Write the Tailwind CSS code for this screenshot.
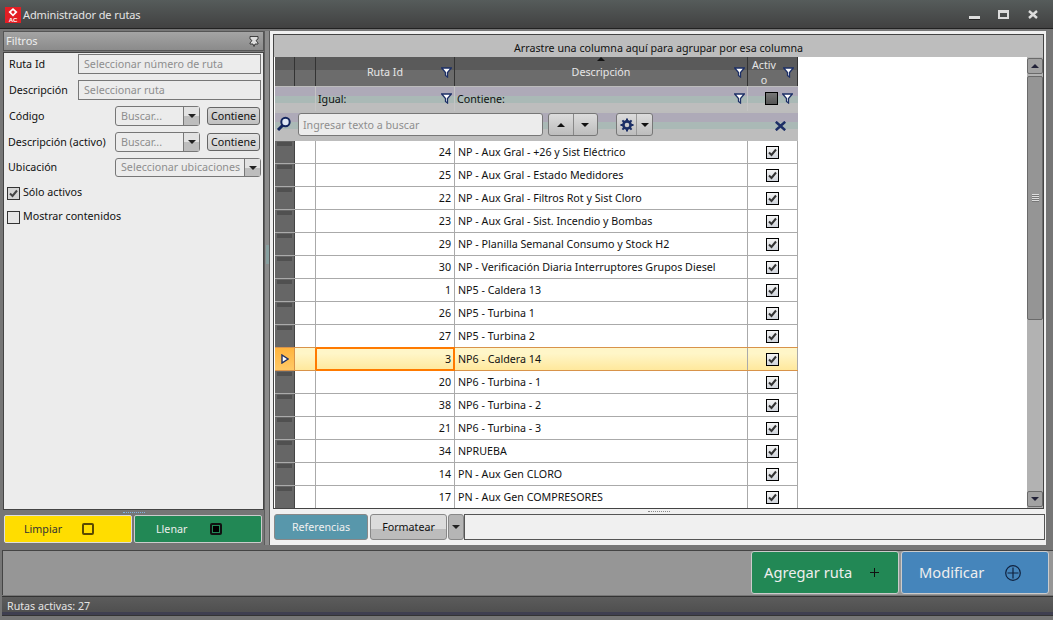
<!DOCTYPE html>
<html lang="es">
<head>
    <meta charset="UTF-8">
    <title>Administrador de rutas</title>
    <script src="https://cdn.jsdelivr.net/npm/@tailwindcss/browser@4"></script>
</head>
<body class="w-[1053px] h-[620px] overflow-hidden bg-[#767676] flex flex-col font-['Noto_Sans',sans-serif] text-[10.7px] text-[#111]">

    <!-- title bar -->
    <header class="h-[29px] shrink-0 flex items-center pl-[5px] pt-[1px] bg-gradient-to-b from-[#565c5b] to-[#414141] border-b border-[#222] text-[#e4e4e4]">
        <svg class="w-[16px] h-[16px]" viewBox="0 0 16 16">
            <rect width="16" height="16" fill="#e31e24"/>
            <path d="M8 1 L12.5 5 L8 9.5 L3.5 5 Z M8 3.2 L6 5 L8 7.2 L10 5 Z" fill="#fff" fill-rule="evenodd"/>
            <text x="8" y="15" text-anchor="middle" font-family="Liberation Sans" font-weight="700" font-size="6" fill="#fff">AC</text>
        </svg>
        <span class="ml-[2px] pt-[1px] text-[11px] tracking-[-0.1px]">Administrador de rutas</span>
        <div class="ml-auto flex items-center pr-[15px]">
            <span class="block w-[11px] h-[4px] mt-[6px] bg-[#ddd] border-b border-[#222]"></span>
            <span class="block ml-[18px] w-[11px] h-[9px] border-2 border-t-[3px] border-[#ddd]"></span>
            <svg class="ml-[19px] w-[10px] h-[9px]" viewBox="0 0 10 9"><path d="M1 1 L9 8 M9 1 L1 8" stroke="#ddd" stroke-width="2.4"/></svg>
        </div>
    </header>

    <div class="flex h-[516px] shrink-0 pt-[2px]">
        <!-- filter panel -->
        <aside class="ml-[3px] w-[261px] flex flex-col">
            <div class="h-[20px] flex items-center justify-between pl-[2px] pr-[4px] bg-gradient-to-b from-[#a4a4a4] to-[#8b8b8b] border border-[#555] text-[#eee]">
                <span class="text-[11px]">Filtros</span>
                <svg class="w-[10px] h-[11px]" viewBox="0 0 10 11"><path d="M1 .5 H9 V3 L7 4.5 L9 7 V8 H6 L5 10.5 L4 8 H1 V7 L3 4.5 L1 3 Z" fill="#ddd" stroke="#222" stroke-width=".8"/></svg>
            </div>
            <div class="mt-[1px] h-[458px] bg-[#ececec] border border-[#444] pt-[1px] pr-[2px] flex flex-col">
                <div class="flex items-center h-[20px] mb-[6px]">
                    <span class="w-[74px] pl-[5px] pt-[1px]">Ruta Id</span>
                    <span class="flex-1 h-[20px] flex items-center pl-[5px] pt-[1px] text-[#8e8e8e] border border-[#777]">Seleccionar número de ruta</span>
                </div>
                <div class="flex items-center h-[20px] mb-[6px]">
                    <span class="w-[74px] pl-[5px] pt-[1px]">Descripción</span>
                    <span class="flex-1 h-[20px] flex items-center pl-[5px] pt-[1px] text-[#8e8e8e] border border-[#777]">Seleccionar ruta</span>
                </div>
                <div class="flex items-center h-[20px] mb-[6px]">
                    <span class="w-[111px] pl-[5px]">Código</span>
                    <span class="w-[85px] h-[20px] flex items-center pl-[5px] text-[#8e8e8e] border border-[#777] rounded-[3px]">Buscar...
                        <span class="ml-auto w-[16px] h-full flex items-center justify-center border-l border-[#777] bg-gradient-to-b from-[#e2e2e2] from-50% to-[#bdbdbd] to-50%"><span class="border-x-[4px] border-x-transparent border-t-[4px] border-t-[#222]"></span></span>
                    </span>
                    <span class="ml-[7px] w-[53px] h-[18px] flex items-center justify-center border border-[#666] rounded-[3px] bg-gradient-to-b from-[#d8d8d8] to-[#c0c0c0]">Contiene</span>
                </div>
                <div class="flex items-center h-[20px] mb-[6px]">
                    <span class="w-[111px] pl-[4px] whitespace-nowrap">Descripción (activo)</span>
                    <span class="w-[85px] h-[20px] flex items-center pl-[5px] text-[#8e8e8e] border border-[#777] rounded-[3px]">Buscar...
                        <span class="ml-auto w-[16px] h-full flex items-center justify-center border-l border-[#777] bg-gradient-to-b from-[#e2e2e2] from-50% to-[#bdbdbd] to-50%"><span class="border-x-[4px] border-x-transparent border-t-[4px] border-t-[#222]"></span></span>
                    </span>
                    <span class="ml-[7px] w-[53px] h-[18px] flex items-center justify-center border border-[#666] rounded-[3px] bg-gradient-to-b from-[#e4e4e4] to-[#d0d0d0]">Contiene</span>
                </div>
                <div class="flex items-center h-[19px] mb-[4px]">
                    <span class="w-[111px] pl-[4px]">Ubicación</span>
                    <span class="flex-1 h-[19px] flex items-center pl-[5px] text-[#8e8e8e] border border-[#777] rounded-[3px] whitespace-nowrap">Seleccionar ubicaciones
                        <span class="ml-auto w-[16px] h-full flex items-center justify-center border-l border-[#777] bg-gradient-to-b from-[#e2e2e2] from-50% to-[#bdbdbd] to-50%"><span class="border-x-[4px] border-x-transparent border-t-[4px] border-t-[#222]"></span></span>
                    </span>
                </div>
                <label class="flex items-center h-[24px] pl-[3px] gap-[3px]">
                    <span class="w-[13px] h-[13px] border border-[#333] bg-[#d4d4d4] flex items-center justify-center">
                        <svg class="w-[9px] h-[9px]" viewBox="0 0 9 9"><path d="M1 4.5 L3.5 7 L8 1.5" fill="none" stroke="#444" stroke-width="2"/></svg>
                    </span>
                    <span class="-mt-[2px]">Sólo activos</span>
                </label>
                <label class="flex items-center h-[24px] pl-[3px] gap-[3px]">
                    <span class="w-[13px] h-[13px] border border-[#333] bg-[#e6e6e6]"></span>
                    <span class="-mt-[2px]">Mostrar contenidos</span>
                </label>
            </div>
            <div class="h-[5px] flex justify-center items-center"><span class="w-[22px] border-t border-dotted border-[#7fb4e0]"></span></div>
            <div class="flex h-[28px] pl-[1px] gap-[2px]">
                <button class="w-[128px] flex items-center pl-[19px] gap-[20px] bg-[#ffdd00] border border-[#ddd] rounded-[2px] text-[#333]">
                    Limpiar <span class="w-[12px] h-[12px] border-2 border-[#5a4a00] rounded-[2px]"></span>
                </button>
                <button class="w-[128px] flex items-center pl-[21px] gap-[23px] bg-[#228855] border border-[#ccc] rounded-[2px] text-[#eee]">
                    Llenar <span class="w-[12px] h-[12px] border-2 border-[#111] rounded-[2px] flex items-center justify-center"><span class="w-[6px] h-[6px] bg-black"></span></span>
                </button>
            </div>
        </aside>

        <!-- splitter -->
        <div class="w-[6px] flex items-center bg-[#8c8c8c] border-x border-[#5c5c5c]"><span class="w-[3px] h-[19px] ml-[1px] mb-[68px] bg-[#87a0a0]"></span></div>

        <!-- grid panel -->
        <section class="mr-[7px] flex-1 bg-[#f0f0f0] pt-[3px] pl-[3px] pr-[2px] pb-[5px] flex flex-col">
            <div class="h-[475px] border border-[#444] bg-white flex flex-col">
                <div class="h-[22px] pt-[5px] text-center bg-[#bdbdbd]">Arrastre una columna aquí para agrupar por esa columna</div>
                <div class="flex h-[451px]">
                    <div class="w-[524px] pl-[1px] flex flex-col">
                        <!-- column heads -->
                        <div class="flex h-[29px] shrink-0 text-[#e6e6e6] bg-gradient-to-b from-[#5a5a5a] from-45% to-[#6c6c6c] to-45%">
                            <div class="w-[20px] border-r border-[#333]"></div>
                            <div class="w-[21px] border-r border-[#333]"></div>
                            <div class="w-[139px] border-r border-[#333] flex items-center justify-center pt-[1px] relative">Ruta Id
                                <svg class="absolute right-[2px] top-[10px] w-[11px] h-[11px]" viewBox="0 0 11 11"><path d="M.7 1 H10.3 L6.5 5.5 V10 L4.5 8.5 V5.5 Z" fill="#fff" stroke="#1c2f66" stroke-width="1.3"/></svg>
                            </div>
                            <div class="w-[293px] border-r border-[#333] flex items-center justify-center pt-[1px] relative">Descripción
                                <span class="absolute top-0 left-[142px] border-x-[4px] border-x-transparent border-b-[4px] border-b-[#111]"></span>
                                <svg class="absolute right-[2px] top-[10px] w-[11px] h-[11px]" viewBox="0 0 11 11"><path d="M.7 1 H10.3 L6.5 5.5 V10 L4.5 8.5 V5.5 Z" fill="#fff" stroke="#1c2f66" stroke-width="1.3"/></svg>
                            </div>
                            <div class="w-[50px] relative leading-[15px] pt-[1px] border-r border-[#333]"><span class="block w-[30px] ml-[1px] text-center">Activ<br>o</span>
                                <svg class="absolute right-[3px] top-[10px] w-[11px] h-[11px]" viewBox="0 0 11 11"><path d="M.7 1 H10.3 L6.5 5.5 V10 L4.5 8.5 V5.5 Z" fill="#fff" stroke="#1c2f66" stroke-width="1.3"/></svg>
                            </div>
                        </div>
                        <!-- filter row -->
                        <div class="flex h-[25px] shrink-0 bg-[linear-gradient(#bcbcbc_0,#bcbcbc_1px,#aeaab8_1px,#aeaab8_10px,#aab9b6_10px,#aab9b6_17px,#bdbdbd_17px)]">
                            <div class="w-[41px] border-r border-[#c4c4c4]"></div>
                            <div class="w-[139px] border-r border-[#c4c4c4] flex items-center pl-[2px] pt-[1px] relative">Igual:
                                <svg class="absolute right-[2px] top-[7px] w-[11px] h-[11px]" viewBox="0 0 11 11"><path d="M.7 1 H10.3 L6.5 5.5 V10 L4.5 8.5 V5.5 Z" fill="#fff" stroke="#1c2f66" stroke-width="1.3"/></svg>
                            </div>
                            <div class="w-[293px] border-r border-[#c4c4c4] flex items-center pl-[2px] pt-[1px] relative">Contiene:
                                <svg class="absolute right-[2px] top-[7px] w-[11px] h-[11px]" viewBox="0 0 11 11"><path d="M.7 1 H10.3 L6.5 5.5 V10 L4.5 8.5 V5.5 Z" fill="#fff" stroke="#1c2f66" stroke-width="1.3"/></svg>
                            </div>
                            <div class="w-[50px] flex items-center justify-end gap-[4px] pr-[5px]">
                                <span class="w-[13px] h-[13px] border border-black bg-gradient-to-b from-[#777] to-[#555]"></span>
                                <svg class="w-[11px] h-[11px]" viewBox="0 0 11 11"><path d="M.7 1 H10.3 L6.5 5.5 V10 L4.5 8.5 V5.5 Z" fill="#fff" stroke="#1c2f66" stroke-width="1.3"/></svg>
                            </div>
                        </div>
                        <!-- search row -->
                        <div class="flex h-[30px] shrink-0 items-start pt-[2px] bg-[linear-gradient(#bcbcbc_0,#bcbcbc_2px,#aeaab8_2px,#aeaab8_11px,#aab9b6_11px,#aab9b6_18px,#bdbdbd_18px)]">
                            <svg class="ml-[1px] mt-[3px] w-[16px] h-[16px]" viewBox="0 0 16 16"><circle cx="9.5" cy="6" r="4.2" fill="#dfe8f5" stroke="#12255e" stroke-width="2"/><path d="M6.5 9.5 L2 14" stroke="#12255e" stroke-width="3"/></svg>
                            <span class="ml-[6px] w-[245px] h-[23px] flex items-center pl-[4px] pt-[2px] bg-[#ececec] border border-[#777] rounded-[3px] text-[#8e8e8e]">Ingresar texto a buscar</span>
                            <span class="ml-[5px] w-[50px] h-[23px] flex border border-[#777] rounded-[3px] bg-gradient-to-b from-[#dcdcdc] to-[#bdbdbd]">
                                <span class="flex-1 border-r border-[#888] flex items-center justify-center"><span class="border-x-[4px] border-x-transparent border-b-[4px] border-b-[#111]"></span></span>
                                <span class="flex-1 flex items-center justify-center"><span class="border-x-[4px] border-x-transparent border-t-[4px] border-t-[#111]"></span></span>
                            </span>
                            <span class="ml-[18px] w-[37px] h-[23px] flex border border-[#777] rounded-[3px] bg-gradient-to-b from-[#dcdcdc] to-[#bdbdbd]">
                                <span class="w-[20px] border-r border-[#999] flex items-center justify-center">
                                    <svg class="w-[14px] h-[14px]" viewBox="0 0 14 14"><circle cx="7" cy="7" r="3.6" fill="none" stroke="#1c2f66" stroke-width="2.6"/><path d="M7 .5 V3 M7 11 V13.5 M.5 7 H3 M11 7 H13.5 M2.4 2.4 L4 4 M10 10 L11.6 11.6 M11.6 2.4 L10 4 M4 10 L2.4 11.6" stroke="#1c2f66" stroke-width="2"/></svg>
                                </span>
                                <span class="flex-1 flex items-center justify-center"><span class="border-x-[4px] border-x-transparent border-t-[4px] border-t-[#111]"></span></span>
                            </span>
                            <svg class="ml-[122px] mt-[8px] w-[11px] h-[10px]" viewBox="0 0 11 10"><path d="M.8 .8 L10.2 9.2 M10.2 .8 L.8 9.2" stroke="#1c2f66" stroke-width="2.6"/></svg>
                        </div>
                        <!-- rows, filled in below -->
                        <div id="rows" class="h-[367px] overflow-hidden"></div>
                    </div>
                    <div class="flex-1 bg-white"></div>
                    <!-- scrollbar -->
                    <div class="w-[16px] pt-[1px] pb-[1px] bg-[#b2b2b2] flex flex-col">
                        <span class="h-[16px] border border-[#6a6a6a] rounded-[2px] bg-[#a2a2a2] flex items-center justify-center"><span class="border-x-[4px] border-x-transparent border-b-[4px] border-b-[#222238]"></span></span>
                        <span class="mt-[2px] h-[244px] border border-[#6a6a6a] rounded-[2px] bg-[#959595] flex items-center justify-center"><span class="w-[7px] h-[8px] bg-[repeating-linear-gradient(#dedede_0,#dedede_1px,#777_1px,#777_2px)]"></span></span>
                        <span class="mt-auto h-[16px] border border-[#6a6a6a] rounded-[2px] bg-[#a2a2a2] flex items-center justify-center"><span class="border-x-[4px] border-x-transparent border-t-[4px] border-t-[#222238]"></span></span>
                    </div>
                </div>
            </div>
            <div class="h-[5px] flex justify-center items-center"><span class="w-[22px] border-t border-dotted border-[#888]"></span></div>
            <div class="h-[26px] flex">
                <button class="ml-[1px] w-[94px] bg-[#5897ab] border border-[#888] rounded-[3px] text-[#f0f0f0]">Referencias</button>
                <button class="ml-[2px] w-[77px] border border-[#888] rounded-[3px] bg-gradient-to-b from-[#dcdcdc] from-60% to-[#bcbcbc] to-60%">Formatear</button>
                <button class="ml-[1px] w-[16px] border border-[#888] rounded-[3px] bg-[#b5b5b5] flex items-center justify-center"><span class="border-x-[4px] border-x-transparent border-t-[4px] border-t-[#222]"></span></button>
                <span class="flex-1 -mr-[1px] border border-[#555]"></span>
            </div>
        </section>
    </div>

    <!-- action bar -->
    <div class="ml-[2px] mt-[5px] h-[45px] shrink-0 bg-[#969696] border-t border-l border-[#444] flex pl-[748px]">
        <button class="w-[148px] h-[43px] flex items-center pl-[12px] gap-[18px] text-[14.7px] bg-[#228855] border border-[#ccc] rounded-[3px] text-[#eee]">Agregar ruta
            <svg class="w-[9px] h-[9px]" viewBox="0 0 9 9"><path d="M4.5 0 V9 M0 4.5 H9" stroke="#111" stroke-width="1"/></svg>
        </button>
        <button class="ml-[2px] w-[148px] h-[43px] flex items-center pl-[17px] gap-[21px] text-[14.7px] bg-[#4585bb] border border-[#ccc] rounded-[3px] text-[#eee]">Modificar
            <svg class="w-[16px] h-[16px]" viewBox="0 0 16 16"><circle cx="8" cy="8" r="7.3" fill="none" stroke="#10223f" stroke-width="1.2"/><path d="M8 2.5 V13.5 M2.5 8 H13.5" stroke="#10223f" stroke-width="1.2"/></svg>
        </button>
    </div>

    <!-- status bar -->
    <div class="ml-[2px] mt-[1px] h-[20px] shrink-0 flex items-center pl-[5px] bg-[linear-gradient(#5c5c5c_0,#4f4f4f_85%,#3f3f50_85%)] border-y border-[#333] text-[#e4e4e4]">Rutas activas: 27</div>

    <script>
        const rutas = [
            [24, 'NP - Aux Gral - +26 y Sist Eléctrico'],
            [25, 'NP - Aux Gral - Estado Medidores'],
            [22, 'NP - Aux Gral - Filtros Rot y Sist Cloro'],
            [23, 'NP - Aux Gral - Sist. Incendio y Bombas'],
            [29, 'NP - Planilla Semanal Consumo y Stock H2'],
            [30, 'NP - Verificación Diaria Interruptores Grupos Diesel'],
            [1, 'NP5 - Caldera 13'],
            [26, 'NP5 - Turbina 1'],
            [27, 'NP5 - Turbina 2'],
            [3, 'NP6 - Caldera 14'],
            [20, 'NP6 - Turbina - 1'],
            [38, 'NP6 - Turbina - 2'],
            [21, 'NP6 - Turbina - 3'],
            [34, 'NPRUEBA'],
            [14, 'PN - Aux Gen CLORO'],
            [17, 'PN - Aux Gen COMPRESORES'],
        ];

        const check = `<span class="w-[13px] h-[13px] border border-black bg-gradient-to-b from-[#f4f4f4] to-[#cfd3da] flex items-center justify-center"><svg class="w-[9px] h-[9px]" viewBox="0 0 9 9"><path d="M1 4.5 L3.5 7 L8 1.5" fill="none" stroke="#333" stroke-width="2"/></svg></span>`;

        const plainRow = (id, desc) => `
            <div class="flex h-[23px] border-b border-[#aaa] bg-white">
                <div class="w-[20px] bg-[#666] border-r border-[#444] px-[2px] pt-[1px]"><div class="h-[4px] bg-[#505050]"></div></div>
                <div class="w-[21px] border-r border-[#aaa]"></div>
                <div class="w-[139px] border-r border-[#aaa] flex items-center justify-end pr-[3px]">${id}</div>
                <div class="w-[293px] border-r border-[#aaa] flex items-center pl-[3px]">${desc}</div>
                <div class="w-[50px] border-r border-[#aaa] flex items-center justify-center">${check}</div>
            </div>`;

        const selectedRow = (id, desc) => `
            <div class="flex h-[24px] -mt-[1px] border-y border-[#d8934a] bg-gradient-to-b from-[#fff6c8] from-25% to-[#ffe89c]">
                <div class="w-[20px] bg-gradient-to-b from-[#ffb43c] to-[#ffc966] border-r border-[#d8934a] flex items-center justify-center">
                    <svg class="w-[8px] h-[10px]" viewBox="0 0 8 10"><path d="M1 1 L7 5 L1 9 Z" fill="#fff" stroke="#1c2f66" stroke-width="1.4"/></svg>
                </div>
                <div class="w-[21px] border-r border-[#ff7a00]"></div>
                <div class="w-[139px] -my-[1px] h-[24px] border-2 border-l-[1px] border-[#ff7a00] flex items-center justify-end pr-[2px]">${id}</div>
                <div class="w-[293px] border-r border-[#aaa] flex items-center pl-[3px]">${desc}</div>
                <div class="w-[50px] border-r border-[#aaa] flex items-center justify-center">${check}</div>
            </div>`;

        document.getElementById('rows').innerHTML = rutas
            .map(([id, desc]) => id === 3 ? selectedRow(id, desc) : plainRow(id, desc))
            .join('');
    </script>
</body>
</html>
